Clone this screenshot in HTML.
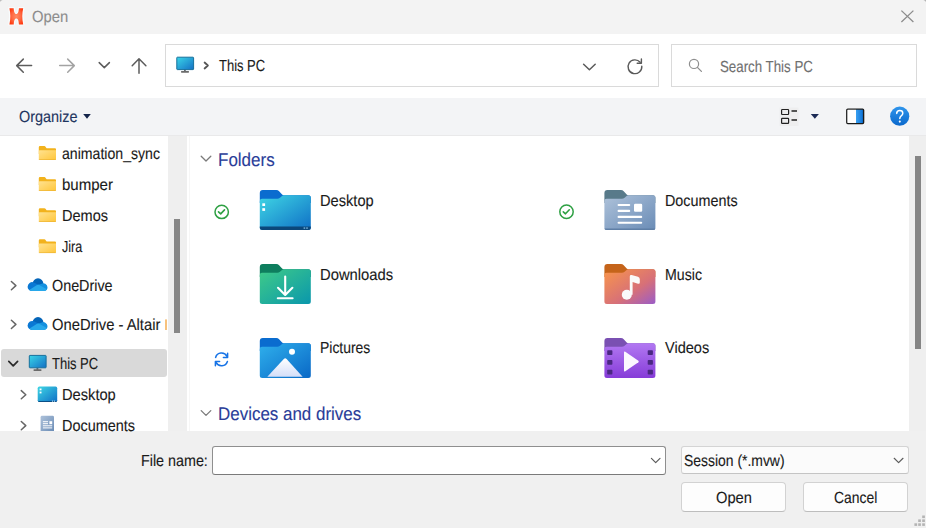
<!DOCTYPE html>
<html><head><meta charset="utf-8"><title>Open</title>
<style>
html,body{margin:0;padding:0;}
body{width:926px;height:528px;overflow:hidden;background:#fff;font-family:"Liberation Sans",sans-serif;}
#win{position:relative;width:926px;height:528px;overflow:hidden;background:#fff;}
.a{position:absolute;}
.t{position:absolute;white-space:pre;transform-origin:0 50%;}
svg{position:absolute;overflow:visible;}
.t{text-rendering:geometricPrecision;-webkit-text-stroke:.12px currentColor;}

</style></head>
<body>
<div id="win">
<!-- backgrounds -->
<div class="a" style="left:0;top:0;width:926px;height:34px;background:#f3f3f3"></div>
<div class="a" style="left:0;top:97.6px;width:926px;height:37.4px;background:#f3f4f6"></div>
<div class="a" style="left:0;top:134.6px;width:926px;height:1px;background:#e9e9ea"></div>
<div class="a" style="left:168px;top:135.5px;width:19px;height:295px;background:#efefef"></div>
<div class="a" style="left:189px;top:135.5px;width:1px;height:295px;background:#f6f6f6"></div>
<div class="a" style="left:909px;top:135.5px;width:17px;height:295px;background:#efefef"></div>
<div class="a" style="left:0;top:430.5px;width:926px;height:97.5px;background:#f0f0f0"></div>

<!-- scroll thumbs -->
<div class="a" style="left:174.3px;top:219px;width:5.7px;height:113.5px;background:#878787"></div>
<div class="a" style="left:915.2px;top:155.8px;width:6.3px;height:193px;background:#858585"></div>

<!-- address + search boxes -->
<div class="a" style="left:165px;top:44px;width:492px;height:41px;border:1px solid #dadada;background:#fff"></div>
<div class="a" style="left:671px;top:44px;width:244px;height:41px;border:1px solid #dadada;background:#fff"></div>

<!-- selected row -->
<div class="a" style="left:1px;top:349px;width:165.5px;height:27.5px;background:#d9d9d9;border-radius:3px"></div>

<!-- bottom controls -->
<div class="a" style="left:211.8px;top:446.3px;width:452px;height:26.4px;border:1px solid #8f8f8f;border-bottom-color:#7a7a7a;border-radius:3px;background:#fff"></div>
<div class="a" style="left:681px;top:446px;width:226px;height:26px;border:1px solid #d4d4d4;border-bottom-color:#c4c4c4;border-radius:3px;background:#fbfbfb"></div>
<div class="a" style="left:681px;top:482px;width:103px;height:28px;border:1px solid #d2d2d2;border-bottom-color:#bdbdbd;border-radius:4px;background:#fdfdfd"></div>
<div class="a" style="left:803px;top:482px;width:103px;height:28px;border:1px solid #d2d2d2;border-bottom-color:#bdbdbd;border-radius:4px;background:#fdfdfd"></div>
<svg class="a" style="left:0;top:0" width="926" height="528" viewBox="0 0 926 528">
<defs>
  <radialGradient id="gLogo" cx=".5" cy=".5" r=".6"><stop offset="0" stop-color="#ff8c64"/><stop offset=".55" stop-color="#ff6a44"/><stop offset="1" stop-color="#ff3a10"/></radialGradient>
  <linearGradient id="gPC" x1="0" y1="0" x2="1" y2="1"><stop offset="0" stop-color="#3ad6e8"/><stop offset="1" stop-color="#146fc4"/></linearGradient>
  <linearGradient id="gDesk" x1="0" y1="0" x2="1" y2="1"><stop offset="0" stop-color="#3fd6e4"/><stop offset="1" stop-color="#0f6fc6"/></linearGradient>
  <linearGradient id="gDown" x1="0" y1="0" x2="1" y2="1"><stop offset="0" stop-color="#3fcb88"/><stop offset="1" stop-color="#0a97ac"/></linearGradient>
  <linearGradient id="gPic" x1="0" y1="0" x2="1" y2="1"><stop offset="0" stop-color="#2fb0ec"/><stop offset="1" stop-color="#0a68c6"/></linearGradient>
  <linearGradient id="gDoc" x1="0" y1="0" x2="1" y2="1"><stop offset="0" stop-color="#aec2da"/><stop offset="1" stop-color="#6a8cb6"/></linearGradient>
  <linearGradient id="gMus" x1="0" y1="0" x2="1" y2="1"><stop offset="0" stop-color="#f9964a"/><stop offset=".6" stop-color="#d77078"/><stop offset="1" stop-color="#9a5cc8"/></linearGradient>
  <linearGradient id="gVid" x1="0" y1="0" x2="0" y2="1"><stop offset="0" stop-color="#b278f2"/><stop offset="1" stop-color="#863cd8"/></linearGradient>
  <linearGradient id="gMtn" x1="0" y1="0" x2="0" y2="1"><stop offset="0" stop-color="#ffffff"/><stop offset="1" stop-color="#d4def8"/></linearGradient>
  <linearGradient id="gYel" x1="0" y1="0" x2="1" y2="1"><stop offset="0" stop-color="#ffe290"/><stop offset="1" stop-color="#ffc63a"/></linearGradient>
  <linearGradient id="gHelp" x1="0" y1="0" x2="0" y2="1"><stop offset="0" stop-color="#2f95ec"/><stop offset="1" stop-color="#0a68cc"/></linearGradient>
  <linearGradient id="gPane" x1="0" y1="0" x2="1" y2="0"><stop offset="0" stop-color="#3aa0f0"/><stop offset="1" stop-color="#0a6fd6"/></linearGradient>
  <!-- big folder 51x40 at origin -->
  <g id="fback"><path d="M0 3 Q0 0 3 0 H16.5 Q18.2 0 19.3 1.3 L22.3 4.6 Q23 5.3 24 5.3 H48.5 Q51 5.3 51 7.8 V13 H0 Z"/></g>
  <g id="ffront"><path d="M0 11 Q0 8.8 2.2 8.8 H17.5 Q19 8.8 20.2 7.8 L22.2 6 Q23 5.3 24.2 5.3 H48.5 Q51 5.3 51 7.8 V37.5 Q51 40 48.5 40 H2.5 Q0 40 0 37.5 Z"/></g>
  <!-- small yellow folder 17.2x13.8 -->
  <g id="yfold">
    <path d="M0 1.2 Q0 0 1.2 0 H5.6 Q6.3 0 6.7 .6 L7.4 1.6 Q7.8 2.1 8.4 2.1 H16.2 Q17.2 2.1 17.2 3.1 V8 H0 Z" fill="#f2b21c"/>
    <path d="M0 4.9 Q0 4.1 .8 4.1 H17.2 V12.8 Q17.2 13.8 16.2 13.8 H1 Q0 13.8 0 12.8 Z" fill="url(#gYel)"/>
    <rect x="0" y="13.1" width="17.2" height=".7" fill="#e9ae2c" opacity=".8"/>
  </g>
  <!-- onedrive cloud ~20x13 -->
  <g id="cloud">
    <circle cx="10.4" cy="5.4" r="5.4" fill="#0364b8"/>
    <path d="M0 8.4 A4.6 4.6 0 0 1 6.2 4.1 L12 7 L8 12.8 H4.4 A4.4 4.4 0 0 1 0 8.4 Z" fill="#0a78d4"/>
    <path d="M13.6 5.6 A4.2 4.2 0 0 1 19.9 9 A3.8 3.8 0 0 1 16.1 12.8 H10 L10.5 6.5 Z" fill="#1490df"/>
    <path d="M1.6 11.6 L9.4 6.7 Q10.5 6.1 11.6 6.7 L19.3 10.9 A3.8 3.8 0 0 1 16.1 12.8 H4.4 A4.4 4.4 0 0 1 1.6 11.6 Z" fill="#28a8ea"/>
  </g>
  <!-- PC icon 17.6 x 16 -->
  <g id="pc">
    <rect x="7.6" y="12.6" width="1.8" height="2.4" fill="#6b6b6b"/>
    <rect x="4.6" y="14.2" width="8" height="1.7" rx=".6" fill="#6b6b6b"/>
    <rect x=".4" y=".4" width="16.8" height="12.4" rx=".6" fill="url(#gPC)" stroke="#17709c" stroke-width="1"/>
  </g>
  <g id="chk" fill="none" stroke="#2ea043" stroke-linecap="round" stroke-linejoin="round">
    <circle cx="0" cy="0" r="6.7" stroke-width="1.5"/>
    <path d="M-3.2 0 L-1 2 L2.8 -2" stroke-width="1.6"/>
  </g>
</defs>

<!-- window corners -->
<path d="M0 0 H2.6 Q.8 .6 0 2 Z" fill="#bcbcbc"/>
<path d="M926 0 H923.4 Q925.2 .6 926 2 Z" fill="#b4b4b4"/>

<!-- logo -->
<path d="M9.4 8.2 H13.7 C13.9 11.4 14.5 14 16.3 14 C18.1 14 18.7 11.4 18.9 8.2 H23.2 Q21.3 16.3 23.2 24.4 H18.9 C18.7 21 18.1 18.4 16.3 18.4 C14.5 18.4 13.9 21 13.8 24.4 H9.4 Q11.3 16.3 9.4 8.2 Z" fill="#fafdfe" stroke="#f8fcfd" stroke-width="2.4" stroke-linejoin="round"/>
<path d="M9.4 8.2 H13.7 C13.9 11.4 14.5 14 16.3 14 C18.1 14 18.7 11.4 18.9 8.2 H23.2 Q21.3 16.3 23.2 24.4 H18.9 C18.7 21 18.1 18.4 16.3 18.4 C14.5 18.4 13.9 21 13.8 24.4 H9.4 Q11.3 16.3 9.4 8.2 Z" fill="url(#gLogo)"/>

<!-- close X -->
<path d="M901.4 10.6 L913.4 22 M913.4 10.6 L901.4 22" stroke="#8c8c8c" stroke-width="1.3" fill="none"/>

<!-- nav arrows -->
<g fill="none" stroke-width="1.5" stroke-linecap="round" stroke-linejoin="round">
  <path d="M31.6 65.6 H16.8 M23.3 59.1 L16.7 65.6 L23.3 72.2" stroke="#5c5c5c"/>
  <path d="M59.7 65.6 H74.2 M67.7 59.1 L74.3 65.6 L67.7 72.2" stroke="#a3a3a3"/>
  <path d="M99.2 62.6 L104.3 67.6 L109.4 62.6" stroke="#5c5c5c"/>
  <path d="M139 73.2 V58.9 M132.2 65.8 L139 58.8 L145.9 65.8" stroke="#5c5c5c"/>
  <path d="M204.6 62.5 L207.9 65.5 L204.6 68.5" stroke="#555" stroke-width="1.8"/>
  <path d="M583.6 64.2 L589.4 69.8 L595.2 64.2" stroke="#5a5a5a"/>
  <path d="M641.8 66.2 A6.9 6.9 0 1 1 640.2 62.3" stroke="#5a5a5a" stroke-width="1.4"/>
  <path d="M641.4 59 V63.2 H637.2" stroke="#5a5a5a" stroke-width="1.4"/>
  <circle cx="694" cy="63.9" r="4.6" stroke="#8e8e8e" stroke-width="1.2"/>
  <path d="M697.4 67.4 L701.4 71.4" stroke="#8e8e8e" stroke-width="1.3"/>
</g>
<use href="#pc" x="176.4" y="56.8"/>

<!-- toolbar -->
<path d="M83.2 114 H90.8 L87 118.7 Z" fill="#14244a"/>
<rect x="779.5" y="107.5" width="19" height="18.5" fill="#eeeeef"/>
<g fill="none" stroke="#222" stroke-width="1.2">
  <rect x="781.6" y="109.5" width="7" height="5" rx=".7"/>
  <rect x="781.6" y="118.4" width="7" height="5" rx=".7"/>
  <path d="M791.5 111 H797 M791.5 120 H797" stroke-width="1.4"/>
</g>
<path d="M810.8 114 H818.9 L814.85 118.8 Z" fill="#1b2a55"/>
<rect x="856" y="109.2" width="7.4" height="14.2" fill="url(#gPane)"/>
<rect x="846.8" y="109.1" width="16.8" height="14.5" rx="1" fill="none" stroke="#1a1a1a" stroke-width="1.4"/>
<rect x="847.6" y="109.9" width="8.4" height="12.9" fill="#fff"/>
<circle cx="899.7" cy="116.2" r="9.6" fill="url(#gHelp)"/>
<path d="M896.7 113.4 Q896.8 110.6 899.8 110.6 Q902.8 110.6 902.8 113.2 Q902.8 114.8 901.2 115.8 Q899.8 116.7 899.8 118.6" fill="none" stroke="#fff" stroke-width="1.5" stroke-linecap="round"/>
<circle cx="899.8" cy="121.6" r="1.05" fill="#fff"/>

<!-- sidebar icons -->
<use href="#yfold" x="38.8" y="146.1"/>
<use href="#yfold" x="38.8" y="177.1"/>
<use href="#yfold" x="38.8" y="208.2"/>
<use href="#yfold" x="38.8" y="239.3"/>
<g fill="none" stroke="#666" stroke-width="1.5" stroke-linecap="round" stroke-linejoin="round">
  <path d="M11.4 281.5 L15.9 285.6 L11.4 289.7"/>
  <path d="M11.4 320.3 L15.9 324.4 L11.4 328.5"/>
  <path d="M21.3 390.6 L25.8 394.7 L21.3 398.8"/>
  <path d="M21.3 421.5 L25.8 425.6 L21.3 429.7"/>
</g>
<path d="M8.8 361.3 L13.2 365.8 L17.6 361.3" fill="none" stroke="#2a2a2a" stroke-width="1.7" stroke-linecap="round" stroke-linejoin="round"/>
<use href="#cloud" x="27.6" y="278.3"/>
<use href="#cloud" x="27.6" y="317.1"/>
<rect x="165.2" y="319.4" width="1.6" height="10.6" fill="#f6b45e"/>
<use href="#pc" x="28.9" y="355"/>
<!-- small desktop icon -->
<rect x="37.7" y="386.6" width="19.5" height="15.3" rx="1.6" fill="url(#gDesk)"/>
<path d="M37.7 401 H57.2 V400.3 Q57.2 401.9 55.6 401.9 H39.3 Q37.7 401.9 37.7 400.3 Z" fill="#0b4f86"/>
<rect x="39.6" y="388.5" width="1.9" height="1.8" fill="#fff"/><rect x="39.6" y="391.6" width="1.9" height="1.8" fill="#fff"/>
<rect x="52" y="400.6" width="1.1" height="1.1" fill="#bfe0f2"/><rect x="54" y="400.6" width="1.1" height="1.1" fill="#bfe0f2"/>
<!-- small documents icon -->
<path d="M40.6 417.2 Q40.6 415.8 42 415.8 H52.6 Q54 415.8 54 417.2 V431 H40.6 Z" fill="url(#gDoc)"/>
<g stroke="#fff" stroke-width="1"><path d="M42.9 421.7 H48 M42.9 423.7 H48 M42.9 425.8 H52.2 M42.9 427.9 H52.2"/></g>
<rect x="49.4" y="421.2" width="2.8" height="3" fill="#fff"/>

<!-- section chevrons -->
<g fill="none" stroke="#7a7a7a" stroke-width="1.3" stroke-linecap="round" stroke-linejoin="round">
  <path d="M201.2 156.2 L206 161 L210.8 156.2"/>
  <path d="M201.2 410.6 L206 415.4 L210.8 410.6"/>
</g>

<!-- status icons -->
<use href="#chk" x="221.7" y="211.9"/>
<use href="#chk" x="566.5" y="211.8"/>
<g fill="none" stroke="#1673e6" stroke-width="1.5" stroke-linecap="round" stroke-linejoin="round">
  <path d="M215.6 357.4 A6.2 6.2 0 0 1 227 356.4"/>
  <path d="M227.6 353.2 V357.6 H223.4"/>
  <path d="M227.4 361.4 A6.2 6.2 0 0 1 216 362.4"/>
  <path d="M215.4 365.8 V361.4 H219.6"/>
</g>

<!-- big folders -->
<g transform="translate(259.8,190)">
  <use href="#fback" fill="#0a6ccf"/>
  <use href="#ffront" fill="url(#gDesk)"/>
  <path d="M0 36.4 H51 V37.5 Q51 40 48.5 40 H2.5 Q0 40 0 37.5 Z" fill="#0b477a"/>
  <rect x="2.5" y="13.3" width="2.8" height="2.7" fill="#fff"/><rect x="2.5" y="18.2" width="2.8" height="2.7" fill="#fff"/>
  <rect x="43.8" y="37.3" width="1.6" height="1.6" fill="#6aa6d0"/><rect x="46.4" y="37.3" width="1.6" height="1.6" fill="#6aa6d0"/>
</g>
<g transform="translate(259.8,264)">
  <use href="#fback" fill="#0e7e5e"/>
  <use href="#ffront" fill="url(#gDown)"/>
  <g fill="none" stroke="#fff" stroke-width="2.1" stroke-linecap="round" stroke-linejoin="round">
    <path d="M25.4 12.6 V30.6 M18.2 23.8 L25.4 31 L32.6 23.8 M18 34.2 H32.8"/>
  </g>
</g>
<g transform="translate(259.8,338)">
  <use href="#fback" fill="#0a6ccf"/>
  <use href="#ffront" fill="url(#gPic)"/>
  <path d="M7.5 38.8 L24 21 Q25.4 19.6 26.8 21 L42.8 38.8 Z" fill="url(#gMtn)"/>
  <circle cx="32.2" cy="13.7" r="3" fill="#fff"/>
</g>
<g transform="translate(604.4,190)">
  <use href="#fback" fill="#587a8a"/>
  <use href="#ffront" fill="url(#gDoc)"/>
  <path d="M0 38.5 H51 Q51 40 48.5 40 H2.5 Q0 40 0 38.5 Z" fill="#5f7fa6"/>
  <g stroke="#fff" stroke-width="2.1" stroke-linecap="round"><path d="M14.2 15 H24.8 M14.2 20.9 H24.8 M14.2 26.9 H36.8 M14.2 32.8 H36.8"/></g>
  <rect x="29.6" y="13.7" width="8.2" height="8" rx="1.2" fill="#fff"/>
</g>
<g transform="translate(604.4,264)">
  <use href="#fback" fill="#c5641a"/>
  <use href="#ffront" fill="url(#gMus)"/>
  <circle cx="22.4" cy="30.8" r="5" fill="#fafafa"/>
  <path d="M25.4 30.8 V12.4 Q25.4 10.6 27.2 11 L33.6 12.8 Q35.4 13.4 35.4 15.2 V18.4 Q35.4 20.2 33.6 19.7 L28.2 18 V30.8 Z" fill="#fafafa"/>
</g>
<g transform="translate(604.4,338)">
  <use href="#fback" fill="#7a50b2"/>
  <use href="#ffront" fill="url(#gVid)"/>
  <g fill="#4a2882">
    <rect x="2.8" y="12.2" width="5.2" height="4.9" rx=".8"/><rect x="2.8" y="21.9" width="5.2" height="4.9" rx=".8"/><rect x="2.8" y="31.7" width="5.2" height="4.9" rx=".8"/>
    <rect x="43.3" y="12.2" width="5.2" height="4.9" rx=".8"/><rect x="43.3" y="21.9" width="5.2" height="4.9" rx=".8"/><rect x="43.3" y="31.7" width="5.2" height="4.9" rx=".8"/>
  </g>
  <path d="M19.6 14.4 Q19.6 13 20.9 13.7 L34 22.8 Q34.8 23.5 34 24.2 L20.9 33.2 Q19.6 33.9 19.6 32.6 Z" fill="#fbf7ff"/>
</g>

<!-- bottom chevrons -->
<g fill="none" stroke="#5c5c5c" stroke-width="1.2" stroke-linecap="round" stroke-linejoin="round">
  <path d="M651.4 458.3 L655.7 462.6 L660 458.3"/>
  <path d="M894.2 458.3 L898.6 462.6 L903 458.3"/>
</g>
<!-- resize grip -->
<g fill="#b4b4b4">
  <rect x="922.2" y="515.5" width="2.7" height="2.6"/>
  <rect x="918.2" y="519.4" width="2.7" height="2.6"/><rect x="922.2" y="519.4" width="2.7" height="2.6"/>
  <rect x="914.4" y="523.3" width="2.7" height="2.6"/><rect x="918.2" y="523.3" width="2.7" height="2.6"/><rect x="922.2" y="523.3" width="2.7" height="2.6"/>
</g>
</svg>

<div class="t" style="left:31.82px;top:10px;font-size:16px;line-height:16px;color:#8d8d8d;transform:scaleX(0.9245);">Open</div>
<div class="t" style="left:219.10px;top:59px;font-size:16px;line-height:16px;color:#1a1a1a;transform:scaleX(0.8101);">This PC</div>
<div class="t" style="left:720.28px;top:60px;font-size:16px;line-height:16px;color:#707070;transform:scaleX(0.8313);">Search This PC</div>
<div class="t" style="left:19.19px;top:110px;font-size:16px;line-height:16px;color:#1e3560;transform:scaleX(0.9011);">Organize</div>
<div class="t" style="left:61.91px;top:147px;font-size:16px;line-height:16px;color:#1a1a1a;transform:scaleX(0.8817);">animation_sync</div>
<div class="t" style="left:61.94px;top:178px;font-size:16px;line-height:16px;color:#1a1a1a;transform:scaleX(0.9393);">bumper</div>
<div class="t" style="left:62.21px;top:209px;font-size:16px;line-height:16px;color:#1a1a1a;transform:scaleX(0.9074);">Demos</div>
<div class="t" style="left:62.12px;top:240px;font-size:16px;line-height:16px;color:#1a1a1a;transform:scaleX(0.7874);">Jira</div>
<div class="t" style="left:52.09px;top:279px;font-size:16px;line-height:16px;color:#1a1a1a;transform:scaleX(0.8965);">OneDrive</div>
<div class="t" style="left:52.07px;top:318px;font-size:16px;line-height:16px;color:#1a1a1a;transform:scaleX(0.9231);">OneDrive - Altair</div>
<div class="t" style="left:52.00px;top:357px;font-size:16px;line-height:16px;color:#1a1a1a;transform:scaleX(0.8101);">This PC</div>
<div class="t" style="left:62.00px;top:388px;font-size:16px;line-height:16px;color:#1a1a1a;transform:scaleX(0.9158);">Desktop</div>
<div class="t" style="left:62.02px;top:419px;font-size:16px;line-height:16px;color:#1a1a1a;transform:scaleX(0.9019);">Documents</div>
<div class="t" style="left:218.21px;top:151px;font-size:18.5px;line-height:18.5px;color:#2a3d99;transform:scaleX(0.9185);">Folders</div>
<div class="t" style="left:218.41px;top:405px;font-size:18.5px;line-height:18.5px;color:#2a3d99;transform:scaleX(0.9161);">Devices and drives</div>
<div class="t" style="left:320.20px;top:194px;font-size:16px;line-height:16px;color:#1a1a1a;transform:scaleX(0.9140);">Desktop</div>
<div class="t" style="left:320.19px;top:268px;font-size:16px;line-height:16px;color:#1a1a1a;transform:scaleX(0.9248);">Downloads</div>
<div class="t" style="left:320.05px;top:341px;font-size:16px;line-height:16px;color:#1a1a1a;transform:scaleX(0.8710);">Pictures</div>
<div class="t" style="left:665.02px;top:194px;font-size:16px;line-height:16px;color:#1a1a1a;transform:scaleX(0.8969);">Documents</div>
<div class="t" style="left:665.14px;top:268px;font-size:16px;line-height:16px;color:#1a1a1a;transform:scaleX(0.8858);">Music</div>
<div class="t" style="left:665.43px;top:341px;font-size:16px;line-height:16px;color:#1a1a1a;transform:scaleX(0.9094);">Videos</div>
<div class="t" style="left:140.92px;top:454px;font-size:16px;line-height:16px;color:#1a1a1a;transform:scaleX(0.8945);">File name:</div>
<div class="t" style="left:684.25px;top:454px;font-size:16px;line-height:16px;color:#1a1a1a;transform:scaleX(0.8701);">Session (*.mvw)</div>
<div class="t" style="left:715.97px;top:491px;font-size:16px;line-height:16px;color:#1a1a1a;transform:scaleX(0.9192);">Open</div>
<div class="t" style="left:833.68px;top:491px;font-size:16px;line-height:16px;color:#1a1a1a;transform:scaleX(0.8695);">Cancel</div>
</div>
</body></html>
